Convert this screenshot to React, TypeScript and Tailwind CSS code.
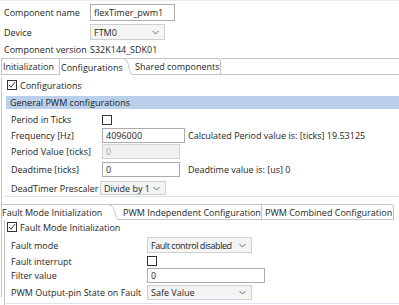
import React from "react";

const B = "border-[#c4c4c4]";

function Chevron() {
  return (
    <svg width="7" height="5" viewBox="0 0 7 5" className="shrink-0">
      <polyline points="0.5,1 3.5,4 6.5,1" fill="none" stroke="#6a6a6a" strokeWidth="1" />
    </svg>
  );
}

function CheckBox({ checked }: { checked?: boolean }) {
  return (
    <div className="w-[10px] h-[10px] border border-[#333333] bg-white flex items-center justify-center shrink-0">
      {checked && (
        <svg width="8" height="8" viewBox="0 0 8 8">
          <polyline points="1,4 3,6.2 7,1.2" fill="none" stroke="#333" strokeWidth="1" />
        </svg>
      )}
    </div>
  );
}

function Select({ value, w, h = "h-[15px]", tight }: { value: string; w: string; h?: string; tight?: boolean }) {
  return (
    <div className={`${w} ${h} border border-[#cfcfcf] bg-[#f4f4f4] flex items-center justify-between pl-[3px] pr-[5px] shrink-0`}>
      <span className={`whitespace-nowrap ${tight ? "tracking-[-0.45px]" : ""}`}>{value}</span>
      <Chevron />
    </div>
  );
}

function Input({ value, w, h = "h-[15px]", disabled }: { value: string; w: string; h?: string; disabled?: boolean }) {
  return (
    <div
      className={`${w} ${h} border flex items-center pl-[3px] shrink-0 ${
        disabled ? "border-[#d4d4d4] bg-[#f0f0f0] text-[#a8a8a8]" : "border-[#acacac] bg-white"
      }`}
    >
      {value}
    </div>
  );
}

function Slant({ h }: { h: number }) {
  return (
    <svg width="8" height={h} viewBox={`0 0 8 ${h}`} className="shrink-0 block">
      <path
        d={`M0,0.5 C3,0.5 4,4 5,${h / 2} C6,${h - 3} 7,${h - 0.5} 8,${h - 0.5}`}
        fill="none"
        stroke="#c4c4c4"
        strokeWidth="1"
      />
    </svg>
  );
}

export default function App() {
  return (
    <div
      className="w-[399px] h-[305px] overflow-hidden bg-white text-[#1e1e1e] text-[9px] leading-none border-t border-[#ececec] whitespace-nowrap"
      style={{ fontFamily: "'Open Sans', 'Noto Sans', sans-serif" }}
    >
      {/* Header */}
      <div className="pt-[3px]">
        <div className="flex items-center h-[17px]">
          <div className="w-[90px] pl-[4px]">Component name</div>
          <Input value="flexTimer_pwm1" w="w-[85px]" h="h-[17px]" />
        </div>
        <div className="flex items-center h-[16px] mt-[3px]">
          <div className="w-[90px] pl-[4px]">Device</div>
          <Select value="FTM0" w="w-[75px]" h="h-[16px]" />
        </div>
        <div className="flex items-center h-[17px] mt-[1px]">
          <div className="w-[90px] pl-[4px]">Component version</div>
          <div>S32K144_SDK01</div>
        </div>
      </div>

      {/* Tab bar */}
      <div className="flex h-[17px] ml-[1px]">
        <div className={`w-[59px] border ${B} flex items-center pl-[1px] bg-white shrink-0`}>Initialization</div>
        <div className={`flex border-t ${B} shrink-0`}>
          <div className="flex items-center pl-[1px] w-[64px]">Configurations</div>
          <Slant h={16} />
        </div>
        <div className={`w-[89px] border-t border-b border-r rounded-tr-[4px] ${B} flex items-center pl-[3px] shrink-0`}>
          Shared components
        </div>
        <div className={`flex-1 border-t border-b ${B}`}></div>
      </div>

      {/* Content */}
      <div className={`ml-[1px] border-l ${B} h-[220px]`}>
        <div className="flex items-center h-[16px] mt-[2px] ml-[5px] gap-[3px]">
          <CheckBox checked />
          <span>Configurations</span>
        </div>
        <div className="ml-[4px] mt-[3px] h-[13px] bg-[#bad0ea] flex items-center pl-[4px]">
          General PWM configurations
        </div>

        <div className="pl-[9px]">
          <div className="flex items-center h-[17px] mt-[2px]">
            <div className="w-[91px]">Period in Ticks</div>
            <CheckBox />
          </div>
          <div className="flex items-center h-[15px]">
            <div className="w-[91px]">Frequency [Hz]</div>
            <Input value="4096000" w="w-[83px]" />
            <div className="ml-[3px]">Calculated Period value is: [ticks] 19.53125</div>
          </div>
          <div className="flex items-center h-[15px] mt-[1px]">
            <div className="w-[91px]">Period Value [ticks]</div>
            <Input value="0" w="w-[78px]" disabled />
          </div>
          <div className="flex items-center h-[15px] mt-[3px]">
            <div className="w-[91px]">Deadtime [ticks]</div>
            <Input value="0" w="w-[78px]" />
            <div className="ml-[8px]">Deadtime value is: [us] 0</div>
          </div>
          <div className="flex items-center h-[14px] mt-[4px]">
            <div className="w-[89px]">DeadTimer Prescaler</div>
            <Select value="Divide by 1" w="w-[66px]" h="h-[14px]" />
          </div>
        </div>

        <div className="ml-[3px] mt-[1px] h-[1px] bg-[#d8e4f3]"></div>

        {/* Sub tab bar */}
        <div className="flex h-[16px] mt-[7px]">
          <div className={`flex border-t ${B} shrink-0`}>
            <div className="flex items-center w-[108px]">Fault Mode Initialization</div>
            <Slant h={15} />
          </div>
          <div className={`w-[144px] border-t border-b border-r ${B} flex items-center pl-[5px] shrink-0`}>
            PWM Independent Configuration
          </div>
          <div className={`w-[132px] border-t border-b border-r rounded-tr-[4px] ${B} flex items-center pl-[3px] shrink-0`}>
            PWM Combined Configuration
          </div>
        </div>

        {/* Sub content */}
        <div className={`ml-[2px] border-l ${B} h-[86px]`}>
          <div className="flex items-center h-[14px] pl-[2px] gap-[3px]">
            <CheckBox checked />
            <span>Fault Mode Initialization</span>
          </div>
          <div className="pl-[6px]">
            <div className="flex items-center h-[16px] mt-[3px]">
              <div className="w-[136px]">Fault mode</div>
              <Select value="Fault control disabled" w="w-[105px]" h="h-[16px]" tight />
            </div>
            <div className="flex items-center h-[14px] mt-[1px]">
              <div className="w-[136px]">Fault interrupt</div>
              <CheckBox />
            </div>
            <div className="flex items-center h-[15px]">
              <div className="w-[136px]">Filter value</div>
              <Input value="0" w="w-[118px]" />
            </div>
            <div className="flex items-center h-[15px] mt-[2px]">
              <div className="w-[136px]">PWM Output-pin State on Fault</div>
              <Select value="Safe Value" w="w-[105px]" />
            </div>
          </div>
          <div className="mt-[3px] h-[1px] bg-[#d8e4f3]"></div>
        </div>
      </div>
    </div>
  );
}
